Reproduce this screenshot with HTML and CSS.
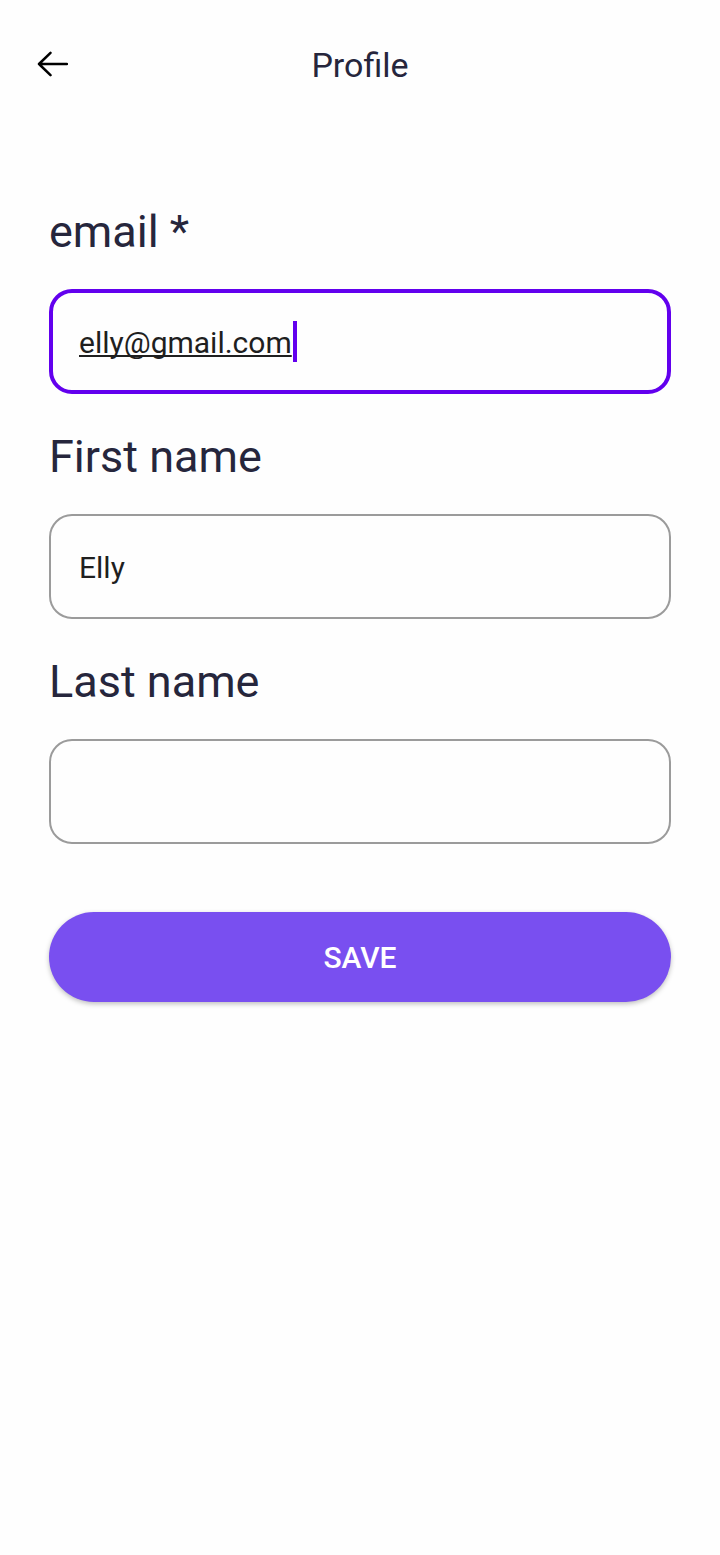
FILE: index.html
```html
<!DOCTYPE html>
<html lang="en">
<head>
  <meta charset="utf-8">
  <meta name="viewport" content="width=device-width, initial-scale=1">
  <title>Profile</title>
  <link rel="stylesheet" href="styles.css">
</head>
<body>
  <header class="top-bar">
    <button class="back" type="button" aria-label="Back">
      <svg class="back-icon" viewBox="0 0 32 28" aria-hidden="true">
        <path d="M14.5 1.8 3 13 14.5 24.2M3 13H31"/>
      </svg>
    </button>
    <h1 class="title">Profile</h1>
  </header>
  <main>
    <form class="form">
      <div class="field">
        <label class="label" for="email">email *</label>
        <div class="control">
          <input class="input input-active" id="email" type="text" inputmode="email" value="elly@gmail.com" spellcheck="false" required>
          <span class="caret" aria-hidden="true"></span>
        </div>
      </div>
      <div class="field">
        <label class="label" for="first-name">First name</label>
        <input class="input" id="first-name" type="text" value="Elly" spellcheck="false">
      </div>
      <div class="field">
        <label class="label" for="last-name">Last name</label>
        <input class="input" id="last-name" type="text">
      </div>
      <button class="save" type="button">SAVE</button>
    </form>
  </main>
</body>
</html>
```
FILE: styles.css
```css
* {
  box-sizing: border-box;
}

body {
  margin: 0;
  min-height: 100vh;
  background: #fefefe;
  color: #26263c;
  font-family: Roboto, "Liberation Sans", sans-serif;
}

.top-bar {
  display: grid;
  grid-template-columns: 1fr auto 1fr;
  align-items: center;
  padding: 40px 36px 0;
}

.back {
  display: flex;
  justify-self: start;
  padding: 0;
  border: 0;
  background: none;
}

.back-icon {
  width: 32px;
  height: 28px;
  fill: none;
  stroke: #000;
  stroke-width: 2.5;
  stroke-linecap: round;
  stroke-linejoin: round;
}

.title {
  margin: 0;
  font-size: 34px;
  font-weight: 400;
  line-height: 50px;
}

.form {
  display: flex;
  flex-direction: column;
  gap: 36px;
  padding: 115px 49px 0;
}

.field {
  display: flex;
  flex-direction: column;
  gap: 31px;
}

.label {
  font-size: 45px;
  line-height: 53px;
}

.control {
  position: relative;
}

.input {
  display: block;
  width: 100%;
  height: 105px;
  padding: 2px 28px 0;
  border: 2px solid #9b9b9b;
  border-radius: 23px;
  outline: 0;
  background: transparent;
  color: #1f1f1f;
  font: 30px/40px Roboto, "Liberation Sans", sans-serif;
}

.input-active {
  padding: 2px 26px 0;
  border: 4px solid #6200ee;
  text-decoration: underline;
  text-decoration-thickness: 2px;
  text-decoration-skip-ink: none;
  text-underline-offset: 2px;
}

.caret {
  position: absolute;
  top: 32px;
  left: 244px;
  width: 4px;
  height: 41px;
  background: #6200ee;
}

.save {
  height: 90px;
  margin-top: 32px;
  padding: 2px 0 0;
  border: 0;
  border-radius: 45px;
  background: #794ff0;
  box-shadow: 0 2px 5px rgba(0, 0, 0, 0.25);
  color: #fff;
  font: 500 30px/40px Roboto, "Liberation Sans", sans-serif;
}
```
